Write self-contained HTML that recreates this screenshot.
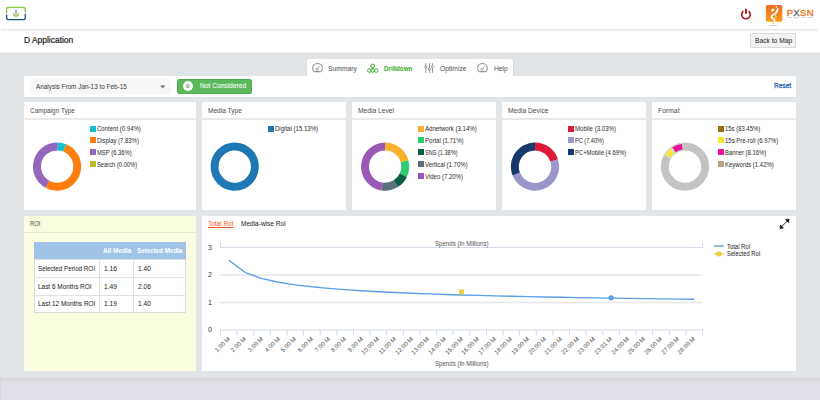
<!DOCTYPE html>
<html><head><meta charset="utf-8"><style>
html,body{margin:0;padding:0;}
body{width:820px;height:400px;position:relative;overflow:hidden;background:#fff;font-family:"Liberation Sans", sans-serif;}
table td{padding:0;vertical-align:middle;white-space:nowrap;}
</style></head><body>
<div style="position:absolute;left:1px;top:29px;width:817px;height:1px;background:#e9e9e9"></div>
<div style="position:absolute;left:1px;top:30px;width:817px;height:1px;background:#f3f3f3"></div>
<svg style="position:absolute;left:5px;top:6px" width="22" height="15" viewBox="0 0 22 15">
<path d="M1.6 6.5 V3.2 Q1.6 1.3 3.5 1.3 H18.4 Q20.3 1.3 20.3 3.2 V6.5" fill="none" stroke="#8dc63f" stroke-width="1.3"/>
<path d="M1.6 8.5 V11.8 Q1.6 13.7 3.5 13.7 H18.4 Q20.3 13.7 20.3 11.8 V8.5" fill="none" stroke="#1f4f63" stroke-width="1.3"/>
<path d="M0.6 6.3 L1.6 7.6 L2.6 6.3 Z" fill="#8dc63f"/><path d="M19.3 8.7 L20.3 7.4 L21.3 8.7 Z" fill="#1f4f63"/>
<path d="M8.6 7.2 Q8.6 10.2 11 10.2 Q13.4 10.2 13.4 7.2" fill="none" stroke="#8dc63f" stroke-width="1.3"/>
<path d="M11 4 V8.2" stroke="#6a7fa8" stroke-width="1.3"/>
</svg>
<svg style="position:absolute;left:740px;top:8px" width="12" height="12" viewBox="0 0 12 12">
<path d="M3.4 3.2 A4.25 4.25 0 1 0 8.6 3.2" fill="none" stroke="#a8141a" stroke-width="1.6"/>
<path d="M6 0.8 V5.7" stroke="#a8141a" stroke-width="1.9"/>
</svg>
<svg style="position:absolute;left:764px;top:3px" width="20" height="24" viewBox="0 0 20 24">
<defs><linearGradient id="og" x1="0" y1="0" x2="0" y2="1"><stop offset="0" stop-color="#f26a22"/><stop offset="1" stop-color="#f7aa1c"/></linearGradient>
<radialGradient id="sh"><stop offset="0" stop-color="#000" stop-opacity=".25"/><stop offset="1" stop-color="#000" stop-opacity="0"/></radialGradient></defs>
<ellipse cx="9.5" cy="22.6" rx="6" ry="1" fill="url(#sh)"/>
<path d="M3.3 2 H16.6 Q18.3 2 18.3 3.7 V17 Q18.3 18.8 16.6 18.8 H11.4 L9 21.8 L8.8 18.8 H3.3 Q1.9 18.8 1.9 17 V3.7 Q1.9 2 3.3 2 Z" fill="url(#og)"/>
<circle cx="8.8" cy="7.0" r="1.6" fill="#fff"/><circle cx="12.5" cy="3.8" r=".9" fill="#fff"/>
<path d="M13.8 5.8 Q13.2 10 8.6 12.3 Q6.2 13.8 8.4 15.2 Q11.8 16.8 10 19.6" fill="none" stroke="#fff" stroke-width="1.7" stroke-linecap="round"/>
<path d="M11.2 12.2 Q13 13.5 11.4 15" fill="none" stroke="#fff" stroke-width="1" opacity=".75"/>
</svg>
<div style="position:absolute;top:7.77px;font-size:9.6px;line-height:9.6px;color:#f26f21;white-space:nowrap;letter-spacing:0.25px;-webkit-text-stroke:0.3px #f26f21;left:786.7px;">P<span style="color:#5f646a;-webkit-text-stroke:0.3px #5f646a">X</span>SN</div>
<div style="position:absolute;left:787px;top:17.4px;width:26px;height:1.0px;background:repeating-linear-gradient(90deg,#aebdd0 0 5px,transparent 5px 7px);opacity:.55"></div>
<div style="position:absolute;top:35.57px;font-size:8.3px;line-height:8.3px;color:#1a1a1a;white-space:nowrap;transform:scaleX(1.0171);transform-origin:0 50%;-webkit-text-stroke:0.2px #1a1a1a;left:24px;">D Application</div>
<div style="position:absolute;left:750px;top:33.3px;width:46px;height:14.700000000000003px;background:#f3f3f3;border:1px solid #d9d9d9;box-sizing:border-box;border-radius:1px"></div>
<div style="position:absolute;top:37.05px;font-size:7.5px;line-height:7.5px;color:#1a1a1a;white-space:nowrap;transform:scaleX(0.8932);transform-origin:0 50%;left:755px;">Back to Map</div>
<div style="position:absolute;left:0px;top:53px;width:820px;height:325px;background:#e1e5e8"></div>
<div style="position:absolute;left:0px;top:52px;width:820px;height:1px;background:#f0f2f3"></div>
<div style="position:absolute;left:0px;top:53px;width:820px;height:1px;background:#dadfe2"></div>
<div style="position:absolute;left:0px;top:377.5px;width:820px;height:2.0px;background:#d8d7db"></div>
<div style="position:absolute;left:0px;top:379.5px;width:820px;height:20.5px;background:#e2dfe8;border-left:1px solid #d9d5dd;border-top:1px solid #dcd9e0;box-sizing:border-box"></div>
<div style="position:absolute;left:306.6px;top:58.7px;width:206.60000000000002px;height:18.299999999999997px;background:#fff;border-radius:2.5px 2.5px 0 0;box-shadow:1px 0 0 #d3d8dc,-1px 0 0 #dadfe2"></div>
<svg style="position:absolute;left:312.1px;top:63.2px" width="12" height="10" viewBox="0 0 12 10">
<path d="M2.2 8.6 Q0.6 7.2 0.6 5.4 A4.8 4.8 0 0 1 10.4 5.4 Q10.4 7.2 8.8 8.6 Z" fill="none" stroke="#9a9a9a" stroke-width="1.1" stroke-linejoin="round"/>
<circle cx="5" cy="6.3" r="1.1" fill="none" stroke="#9a9a9a" stroke-width=".9"/><path d="M5.6 5.6 L7.4 3.4" stroke="#9a9a9a" stroke-width=".9"/>
</svg>
<div style="position:absolute;top:65.05px;font-size:7.5px;line-height:7.5px;color:#505050;white-space:nowrap;transform:scaleX(0.9019);transform-origin:0 50%;left:328px;">Summary</div>
<svg style="position:absolute;left:367px;top:63px" width="12" height="10" viewBox="0 0 12 10">
<g fill="none" stroke="#3aaa35" stroke-width="1"><circle cx="5.7" cy="3" r="1.9"/><circle cx="2.4" cy="7.5" r="1.8"/><circle cx="5.7" cy="7.5" r="1.8"/><circle cx="9.2" cy="7.5" r="1.8"/></g>
<path d="M4.6 4.6 L5.7 6 L6.8 4.6 Z" fill="#3aaa35"/>
</svg>
<div style="position:absolute;top:64.60px;font-size:7.8px;line-height:7.8px;color:#33a82c;white-space:nowrap;transform:scaleX(0.7964);transform-origin:0 50%;font-weight:bold;left:384.2px;">Drilldown</div>
<svg style="position:absolute;left:423px;top:63px" width="12" height="10" viewBox="0 0 12 10">
<g stroke="#8a8a8a" stroke-width="1" fill="#fff"><path d="M2.8 0.2 V9.8 M6.4 0.2 V9.8 M9.4 0.2 V9.8"/>
<path d="M2.8 2.4 L4.1 3.8 L2.8 5.2 L1.5 3.8 Z"/><path d="M6.4 4.6 L7.7 6 L6.4 7.4 L5.1 6 Z"/><path d="M9.4 2.2 L10.6 3.6 L9.4 5 L8.2 3.6 Z"/></g>
</svg>
<div style="position:absolute;top:65.05px;font-size:7.5px;line-height:7.5px;color:#505050;white-space:nowrap;transform:scaleX(0.8969);transform-origin:0 50%;left:440px;">Optimize</div>
<svg style="position:absolute;left:477.2px;top:63.4px" width="12" height="10" viewBox="0 0 12 10">
<path d="M2.2 8.6 Q0.6 7.2 0.6 5.4 A4.8 4.8 0 0 1 10.4 5.4 Q10.4 7.2 8.8 8.6 Z" fill="none" stroke="#9a9a9a" stroke-width="1.1" stroke-linejoin="round"/>
<circle cx="5" cy="6.3" r="1.1" fill="none" stroke="#9a9a9a" stroke-width=".9"/><path d="M5.6 5.6 L7.4 3.4" stroke="#9a9a9a" stroke-width=".9"/>
</svg>
<div style="position:absolute;top:65.05px;font-size:7.5px;line-height:7.5px;color:#505050;white-space:nowrap;transform:scaleX(0.8904);transform-origin:0 50%;left:493.7px;">Help</div>
<div style="position:absolute;left:24px;top:76px;width:772px;height:21px;background:#fff"></div>
<div style="position:absolute;left:30px;top:78.7px;width:140.5px;height:15.099999999999994px;background:#f7f7f7"></div>
<div style="position:absolute;top:82.97px;font-size:7.0px;line-height:7.0px;color:#3a3a3a;white-space:nowrap;transform:scaleX(0.9118);transform-origin:0 50%;left:36px;">Analysis From Jan-13 to Feb-15</div>
<svg style="position:absolute;left:160px;top:84.5px" width="6" height="4"><path d="M0.3 0.5 H5.3 L2.8 3.3 Z" fill="#5b6470"/></svg>
<div style="position:absolute;left:176.6px;top:78.9px;width:75.0px;height:14.899999999999991px;background:#5cb85c;border:1px solid #4cae4c;box-sizing:border-box;border-radius:2px"></div>
<div style="position:absolute;left:182.8px;top:80.8px;width:10px;height:10px;border-radius:50%;background:#fff"></div>
<div style="position:absolute;top:83.05px;font-size:6.2px;line-height:6.2px;color:#5a9a55;white-space:nowrap;font-weight:bold;left:-312.3px;width:1000px;text-align:center;">0</div>
<div style="position:absolute;top:82.91px;font-size:6.6px;line-height:6.6px;color:#fff;white-space:nowrap;transform:scaleX(1.0059);transform-origin:0 50%;-webkit-text-stroke:0.05px #fff;left:199.9px;">Not Considered</div>
<div style="position:absolute;top:83.36px;font-size:6.9px;line-height:6.9px;color:#2f6db5;white-space:nowrap;transform:scaleX(0.9558);transform-origin:0 50%;-webkit-text-stroke:0.3px #2f6db5;left:773.6px;">Reset</div>
<div style="position:absolute;left:24px;top:102px;width:172px;height:108px;background:#fff"></div>
<div style="position:absolute;left:24px;top:118px;width:172px;height:2px;background:#e9e9e9"></div>
<div style="position:absolute;top:107.47px;font-size:7.0px;line-height:7.0px;color:#4a4a4a;white-space:nowrap;transform:scaleX(0.9164);transform-origin:0 50%;left:30px;">Campaign Type</div>
<div style="position:absolute;left:202px;top:102px;width:144px;height:108px;background:#fff"></div>
<div style="position:absolute;left:202px;top:118px;width:144px;height:2px;background:#e9e9e9"></div>
<div style="position:absolute;top:107.47px;font-size:7.0px;line-height:7.0px;color:#4a4a4a;white-space:nowrap;transform:scaleX(0.9380);transform-origin:0 50%;left:208px;">Media Type</div>
<div style="position:absolute;left:352px;top:102px;width:144px;height:108px;background:#fff"></div>
<div style="position:absolute;left:352px;top:118px;width:144px;height:2px;background:#e9e9e9"></div>
<div style="position:absolute;top:107.47px;font-size:7.0px;line-height:7.0px;color:#4a4a4a;white-space:nowrap;transform:scaleX(0.9520);transform-origin:0 50%;left:358px;">Media Level</div>
<div style="position:absolute;left:502px;top:102px;width:144px;height:108px;background:#fff"></div>
<div style="position:absolute;left:502px;top:118px;width:144px;height:2px;background:#e9e9e9"></div>
<div style="position:absolute;top:107.47px;font-size:7.0px;line-height:7.0px;color:#4a4a4a;white-space:nowrap;transform:scaleX(0.9535);transform-origin:0 50%;left:508px;">Media Device</div>
<div style="position:absolute;left:652px;top:102px;width:144px;height:108px;background:#fff"></div>
<div style="position:absolute;left:652px;top:118px;width:144px;height:2px;background:#e9e9e9"></div>
<div style="position:absolute;top:107.47px;font-size:7.0px;line-height:7.0px;color:#4a4a4a;white-space:nowrap;transform:scaleX(0.9718);transform-origin:0 50%;left:658px;">Format</div>
<svg style="position:absolute;left:0;top:0" width="820" height="400"><path d="M57.10 142.50 A24.1 24.1 0 0 1 66.27 144.31 L63.26 151.62 A16.2 16.2 0 0 0 57.10 150.40 Z" fill="#17becf"/><path d="M66.27 144.31 A24.1 24.1 0 1 1 45.54 187.74 L49.33 180.81 A16.2 16.2 0 1 0 63.26 151.62 Z" fill="#ff7f0e"/><path d="M45.54 187.74 A24.1 24.1 0 0 1 57.10 142.50 L57.10 150.40 A16.2 16.2 0 0 0 49.33 180.81 Z" fill="#9467bd"/><circle cx="234.7" cy="166.6" r="20.15" fill="none" stroke="#1f77b4" stroke-width="7.900000000000002"/><path d="M385.10 142.50 A24.1 24.1 0 0 1 408.35 160.25 L400.73 162.33 A16.2 16.2 0 0 0 385.10 150.40 Z" fill="#fbb02d"/><path d="M408.35 160.25 A24.1 24.1 0 0 1 406.87 176.94 L399.73 173.55 A16.2 16.2 0 0 0 400.73 162.33 Z" fill="#2ecc71"/><path d="M406.87 176.94 A24.1 24.1 0 0 1 397.79 187.09 L393.63 180.37 A16.2 16.2 0 0 0 399.73 173.55 Z" fill="#0b5e46"/><path d="M397.79 187.09 A24.1 24.1 0 0 1 381.46 190.42 L382.65 182.61 A16.2 16.2 0 0 0 393.63 180.37 Z" fill="#5d6e7e"/><path d="M381.46 190.42 A24.1 24.1 0 0 1 385.10 142.50 L385.10 150.40 A16.2 16.2 0 0 0 382.65 182.61 Z" fill="#9b59b6"/><path d="M535.00 142.50 A24.1 24.1 0 0 1 557.94 159.21 L550.42 161.63 A16.2 16.2 0 0 0 535.00 150.40 Z" fill="#dc1a3a"/><path d="M557.94 159.21 A24.1 24.1 0 0 1 512.60 175.50 L519.94 172.58 A16.2 16.2 0 0 0 550.42 161.63 Z" fill="#9a96cc"/><path d="M512.60 175.50 A24.1 24.1 0 0 1 535.00 142.50 L535.00 150.40 A16.2 16.2 0 0 0 519.94 172.58 Z" fill="#17396b"/><circle cx="685" cy="166.6" r="20.15" fill="none" stroke="#c3c3c3" stroke-width="7.900000000000002"/><path d="M664.27 155.11 A23.700000000000003 23.700000000000003 0 0 1 670.74 147.67 L675.01 153.34 A16.599999999999998 16.599999999999998 0 0 0 670.48 158.55 Z" fill="#fbe43e" stroke="#d3dcd3" stroke-width="1.2"/><path d="M671.41 147.19 A23.700000000000003 23.700000000000003 0 0 1 682.52 143.03 L683.26 150.09 A16.599999999999998 16.599999999999998 0 0 0 675.48 153.00 Z" fill="#ec139b" stroke="#d3dcd3" stroke-width="1.2"/></svg>
<div style="position:absolute;left:90px;top:125.5px;width:6px;height:6.0px;background:#17becf"></div>
<div style="position:absolute;top:126.37px;font-size:6.3px;line-height:6.3px;color:#2a2a2a;white-space:nowrap;transform:scaleX(0.9565);transform-origin:0 50%;left:97.2px;">Content (0.94%)</div>
<div style="position:absolute;left:90px;top:137.45px;width:6px;height:6.0px;background:#ff7f0e"></div>
<div style="position:absolute;top:138.32px;font-size:6.3px;line-height:6.3px;color:#2a2a2a;white-space:nowrap;transform:scaleX(0.9417);transform-origin:0 50%;left:97.2px;">Display (7.83%)</div>
<div style="position:absolute;left:90px;top:149.4px;width:6px;height:6.0px;background:#9467bd"></div>
<div style="position:absolute;top:150.27px;font-size:6.3px;line-height:6.3px;color:#2a2a2a;white-space:nowrap;transform:scaleX(0.9282);transform-origin:0 50%;left:97.2px;">MSP (6.36%)</div>
<div style="position:absolute;left:90px;top:161.35px;width:6px;height:6.0px;background:#bcbd22"></div>
<div style="position:absolute;top:162.22px;font-size:6.3px;line-height:6.3px;color:#2a2a2a;white-space:nowrap;transform:scaleX(0.9176);transform-origin:0 50%;left:97.2px;">Search (0.00%)</div>
<div style="position:absolute;left:268px;top:125.5px;width:6px;height:6.0px;background:#1f77b4"></div>
<div style="position:absolute;top:126.37px;font-size:6.3px;line-height:6.3px;color:#2a2a2a;white-space:nowrap;transform:scaleX(0.9613);transform-origin:0 50%;left:275.2px;">Digital (15.13%)</div>
<div style="position:absolute;left:418px;top:125.5px;width:6px;height:6.0px;background:#fbb02d"></div>
<div style="position:absolute;top:126.37px;font-size:6.3px;line-height:6.3px;color:#2a2a2a;white-space:nowrap;transform:scaleX(0.9666);transform-origin:0 50%;left:425.2px;">Adnetwork (3.14%)</div>
<div style="position:absolute;left:418px;top:137.45px;width:6px;height:6.0px;background:#2ecc71"></div>
<div style="position:absolute;top:138.32px;font-size:6.3px;line-height:6.3px;color:#2a2a2a;white-space:nowrap;transform:scaleX(0.9582);transform-origin:0 50%;left:425.2px;">Portal (1.71%)</div>
<div style="position:absolute;left:418px;top:149.4px;width:6px;height:6.0px;background:#0b5e46"></div>
<div style="position:absolute;top:150.27px;font-size:6.3px;line-height:6.3px;color:#2a2a2a;white-space:nowrap;transform:scaleX(0.8853);transform-origin:0 50%;left:425.2px;">SNS (1.38%)</div>
<div style="position:absolute;left:418px;top:161.35px;width:6px;height:6.0px;background:#5d6e7e"></div>
<div style="position:absolute;top:162.22px;font-size:6.3px;line-height:6.3px;color:#2a2a2a;white-space:nowrap;transform:scaleX(0.9621);transform-origin:0 50%;left:425.2px;">Vertical (1.70%)</div>
<div style="position:absolute;left:418px;top:173.3px;width:6px;height:6.0px;background:#9b59b6"></div>
<div style="position:absolute;top:174.17px;font-size:6.3px;line-height:6.3px;color:#2a2a2a;white-space:nowrap;transform:scaleX(0.9541);transform-origin:0 50%;left:425.2px;">Video (7.20%)</div>
<div style="position:absolute;left:568px;top:125.5px;width:6px;height:6.0px;background:#dc1a3a"></div>
<div style="position:absolute;top:126.37px;font-size:6.3px;line-height:6.3px;color:#2a2a2a;white-space:nowrap;transform:scaleX(0.9674);transform-origin:0 50%;left:575.2px;">Mobile (3.03%)</div>
<div style="position:absolute;left:568px;top:137.45px;width:6px;height:6.0px;background:#9a96cc"></div>
<div style="position:absolute;top:138.32px;font-size:6.3px;line-height:6.3px;color:#2a2a2a;white-space:nowrap;transform:scaleX(0.8890);transform-origin:0 50%;left:575.2px;">PC (7.40%)</div>
<div style="position:absolute;left:568px;top:149.4px;width:6px;height:6.0px;background:#17396b"></div>
<div style="position:absolute;top:150.27px;font-size:6.3px;line-height:6.3px;color:#2a2a2a;white-space:nowrap;transform:scaleX(0.9338);transform-origin:0 50%;left:575.2px;">PC+Mobile (4.69%)</div>
<div style="position:absolute;left:718px;top:125.5px;width:6px;height:6.0px;background:#9c6b10"></div>
<div style="position:absolute;top:126.37px;font-size:6.3px;line-height:6.3px;color:#2a2a2a;white-space:nowrap;transform:scaleX(0.9387);transform-origin:0 50%;left:725.2px;">15s (83.45%)</div>
<div style="position:absolute;left:718px;top:137.45px;width:6px;height:6.0px;background:#fbe43e"></div>
<div style="position:absolute;top:138.32px;font-size:6.3px;line-height:6.3px;color:#2a2a2a;white-space:nowrap;transform:scaleX(0.9493);transform-origin:0 50%;left:725.2px;">15s Pre-roll (6.97%)</div>
<div style="position:absolute;left:718px;top:149.4px;width:6px;height:6.0px;background:#ec139b"></div>
<div style="position:absolute;top:150.27px;font-size:6.3px;line-height:6.3px;color:#2a2a2a;white-space:nowrap;transform:scaleX(0.9330);transform-origin:0 50%;left:725.2px;">Banner (8.16%)</div>
<div style="position:absolute;left:718px;top:161.35px;width:6px;height:6.0px;background:#b5a282"></div>
<div style="position:absolute;top:162.22px;font-size:6.3px;line-height:6.3px;color:#2a2a2a;white-space:nowrap;transform:scaleX(0.9477);transform-origin:0 50%;left:725.2px;">Keywords (1.42%)</div>
<div style="position:absolute;left:24px;top:215.5px;width:172px;height:155.0px;background:#fafddf"></div>
<div style="position:absolute;left:24px;top:231.5px;width:172px;height:1.5px;background:#e8ead2"></div>
<div style="position:absolute;top:220.64px;font-size:6.8px;line-height:6.8px;color:#4a4a4a;white-space:nowrap;transform:scaleX(0.8488);transform-origin:0 50%;left:30px;">ROI</div>
<div style="position:absolute;left:33.5px;top:242px;width:152.7px;height:17px;background:#9ec3e6"></div>
<div style="position:absolute;left:33.5px;top:259px;width:152.7px;height:54px;background:#fff;border:1px solid #dcdcdc;box-sizing:border-box"></div>
<div style="position:absolute;left:33.5px;top:277.0px;width:152.7px;height:1.0px;background:#e0e0e0"></div>
<div style="position:absolute;left:33.5px;top:295.1px;width:152.7px;height:1.0px;background:#e0e0e0"></div>
<div style="position:absolute;left:98.7px;top:259px;width:1.0px;height:54px;background:#e0e0e0"></div>
<div style="position:absolute;left:133.3px;top:259px;width:1.0px;height:54px;background:#e0e0e0"></div>
<div style="position:absolute;top:246.85px;font-size:7.5px;line-height:7.5px;color:#fff;white-space:nowrap;transform:scaleX(0.8632);transform-origin:0 50%;font-weight:bold;left:103.1px;">All Media</div>
<div style="position:absolute;top:246.85px;font-size:7.5px;line-height:7.5px;color:#fff;white-space:nowrap;transform:scaleX(0.8416);transform-origin:0 50%;font-weight:bold;left:137.3px;">Selected Media</div>
<div style="position:absolute;top:265.76px;font-size:6.9px;line-height:6.9px;color:#1a1a1a;white-space:nowrap;transform:scaleX(0.9062);transform-origin:0 50%;left:38px;">Selected Period ROI</div>
<div style="position:absolute;top:265.76px;font-size:6.9px;line-height:6.9px;color:#1a1a1a;white-space:nowrap;transform:scaleX(0.9706);transform-origin:0 50%;left:104.2px;">1.16</div>
<div style="position:absolute;top:265.76px;font-size:6.9px;line-height:6.9px;color:#1a1a1a;white-space:nowrap;transform:scaleX(0.9551);transform-origin:0 50%;left:138.4px;">1.40</div>
<div style="position:absolute;top:283.66px;font-size:6.9px;line-height:6.9px;color:#1a1a1a;white-space:nowrap;transform:scaleX(0.9320);transform-origin:0 50%;left:38px;">Last 6 Months ROI</div>
<div style="position:absolute;top:283.66px;font-size:6.9px;line-height:6.9px;color:#1a1a1a;white-space:nowrap;transform:scaleX(0.9706);transform-origin:0 50%;left:104.2px;">1.49</div>
<div style="position:absolute;top:283.66px;font-size:6.9px;line-height:6.9px;color:#1a1a1a;white-space:nowrap;transform:scaleX(0.9551);transform-origin:0 50%;left:138.4px;">2.06</div>
<div style="position:absolute;top:301.46px;font-size:6.9px;line-height:6.9px;color:#1a1a1a;white-space:nowrap;transform:scaleX(0.9357);transform-origin:0 50%;left:38px;">Last 12 Months ROI</div>
<div style="position:absolute;top:301.46px;font-size:6.9px;line-height:6.9px;color:#1a1a1a;white-space:nowrap;transform:scaleX(0.9706);transform-origin:0 50%;left:104.2px;">1.19</div>
<div style="position:absolute;top:301.46px;font-size:6.9px;line-height:6.9px;color:#1a1a1a;white-space:nowrap;transform:scaleX(0.9551);transform-origin:0 50%;left:138.4px;">1.40</div>
<div style="position:absolute;left:201.5px;top:215.5px;width:594.5px;height:155.0px;background:#fff"></div>
<div style="position:absolute;top:220.76px;font-size:6.9px;line-height:6.9px;color:#ee5a24;white-space:nowrap;transform:scaleX(0.9371);transform-origin:0 50%;text-decoration:underline;left:207.75px;">Total RoI</div>
<div style="position:absolute;top:220.76px;font-size:6.9px;line-height:6.9px;color:#1a1a1a;white-space:nowrap;transform:scaleX(0.9447);transform-origin:0 50%;left:240.6px;">Media-wise RoI</div>
<svg style="position:absolute;left:0;top:0" width="820" height="400"><line x1="220.5" x2="702.5" y1="275.0" y2="275.0" stroke="#e6e6e6" stroke-width="1.3"/><line x1="220.5" x2="702.5" y1="302.5" y2="302.5" stroke="#e6e6e6" stroke-width="1.3"/><path d="M220.5 242.5 V247.5 H702.5 V242.5" fill="none" stroke="#d0dbe7" stroke-width="1"/><path d="M220.5 335.5 V330 H702.5 V335.5" fill="none" stroke="#d0dbe7" stroke-width="1"/><line x1="237.12" x2="237.12" y1="330" y2="335.5" stroke="#d0dbe7" stroke-width="1"/><line x1="253.74" x2="253.74" y1="330" y2="335.5" stroke="#d0dbe7" stroke-width="1"/><line x1="270.36" x2="270.36" y1="330" y2="335.5" stroke="#d0dbe7" stroke-width="1"/><line x1="286.98" x2="286.98" y1="330" y2="335.5" stroke="#d0dbe7" stroke-width="1"/><line x1="303.60" x2="303.60" y1="330" y2="335.5" stroke="#d0dbe7" stroke-width="1"/><line x1="320.22" x2="320.22" y1="330" y2="335.5" stroke="#d0dbe7" stroke-width="1"/><line x1="336.84" x2="336.84" y1="330" y2="335.5" stroke="#d0dbe7" stroke-width="1"/><line x1="353.47" x2="353.47" y1="330" y2="335.5" stroke="#d0dbe7" stroke-width="1"/><line x1="370.09" x2="370.09" y1="330" y2="335.5" stroke="#d0dbe7" stroke-width="1"/><line x1="386.71" x2="386.71" y1="330" y2="335.5" stroke="#d0dbe7" stroke-width="1"/><line x1="403.33" x2="403.33" y1="330" y2="335.5" stroke="#d0dbe7" stroke-width="1"/><line x1="419.95" x2="419.95" y1="330" y2="335.5" stroke="#d0dbe7" stroke-width="1"/><line x1="436.57" x2="436.57" y1="330" y2="335.5" stroke="#d0dbe7" stroke-width="1"/><line x1="453.19" x2="453.19" y1="330" y2="335.5" stroke="#d0dbe7" stroke-width="1"/><line x1="469.81" x2="469.81" y1="330" y2="335.5" stroke="#d0dbe7" stroke-width="1"/><line x1="486.43" x2="486.43" y1="330" y2="335.5" stroke="#d0dbe7" stroke-width="1"/><line x1="503.05" x2="503.05" y1="330" y2="335.5" stroke="#d0dbe7" stroke-width="1"/><line x1="519.67" x2="519.67" y1="330" y2="335.5" stroke="#d0dbe7" stroke-width="1"/><line x1="536.29" x2="536.29" y1="330" y2="335.5" stroke="#d0dbe7" stroke-width="1"/><line x1="552.91" x2="552.91" y1="330" y2="335.5" stroke="#d0dbe7" stroke-width="1"/><line x1="569.53" x2="569.53" y1="330" y2="335.5" stroke="#d0dbe7" stroke-width="1"/><line x1="586.16" x2="586.16" y1="330" y2="335.5" stroke="#d0dbe7" stroke-width="1"/><line x1="602.78" x2="602.78" y1="330" y2="335.5" stroke="#d0dbe7" stroke-width="1"/><line x1="619.40" x2="619.40" y1="330" y2="335.5" stroke="#d0dbe7" stroke-width="1"/><line x1="636.02" x2="636.02" y1="330" y2="335.5" stroke="#d0dbe7" stroke-width="1"/><line x1="652.64" x2="652.64" y1="330" y2="335.5" stroke="#d0dbe7" stroke-width="1"/><line x1="669.26" x2="669.26" y1="330" y2="335.5" stroke="#d0dbe7" stroke-width="1"/><line x1="685.88" x2="685.88" y1="330" y2="335.5" stroke="#d0dbe7" stroke-width="1"/><polyline points="228.81,260.30 245.43,272.67 262.05,278.57 278.67,282.25 295.29,284.85 311.91,286.82 328.53,288.38 345.16,289.67 361.78,290.75 378.40,291.68 395.02,292.50 411.64,293.21 428.26,293.85 444.88,294.43 461.50,294.95 478.12,295.42 494.74,295.86 511.36,296.26 527.98,296.63 544.60,296.98 561.22,297.31 577.84,297.61 594.47,297.90 611.09,298.17 627.71,298.42 644.33,298.66 660.95,298.89 677.57,299.11 694.19,299.31" fill="none" stroke="#5c9fe4" stroke-width="1.4"/><circle cx="611.09" cy="297.8" r="2.6" fill="#5c9fe4"/><rect x="459.00" y="289.5" width="5" height="5" fill="#e9d043"/><line x1="714" x2="724" y1="246" y2="246" stroke="#5c9fe4" stroke-width="1.4"/><line x1="714" x2="724" y1="254" y2="254" stroke="#e9d043" stroke-width="1.4"/><rect x="716.5" y="251.7" width="5" height="4.6" fill="#e9d043"/><g stroke="#1a1a1a" stroke-width="0.9" fill="#1a1a1a"><line x1="781.2" y1="227.1" x2="787.8" y2="220.5"/><path d="M780 228.4 L780.4 225.1 L783.3 228 Z"/><path d="M789 219.2 L788.6 222.5 L785.7 219.6 Z"/></g></svg>
<div style="position:absolute;top:326.31px;font-size:7.2px;line-height:7.2px;color:#3a3a3a;white-space:nowrap;left:208.0px;">0</div>
<div style="position:absolute;top:298.81px;font-size:7.2px;line-height:7.2px;color:#3a3a3a;white-space:nowrap;left:208.0px;">1</div>
<div style="position:absolute;top:271.31px;font-size:7.2px;line-height:7.2px;color:#3a3a3a;white-space:nowrap;left:208.0px;">2</div>
<div style="position:absolute;top:243.81px;font-size:7.2px;line-height:7.2px;color:#3a3a3a;white-space:nowrap;left:208.0px;">3</div>
<div style="position:absolute;top:240.57px;font-size:6.3px;line-height:6.3px;color:#555;white-space:nowrap;transform:scaleX(0.9687);transform-origin:0 50%;left:435px;">Spends (In Millions)</div>
<div style="position:absolute;top:360.57px;font-size:6.3px;line-height:6.3px;color:#555;white-space:nowrap;transform:scaleX(0.9687);transform-origin:0 50%;left:435px;">Spends (In Millions)</div>
<div style="position:absolute;left:28.81px;top:334.6px;width:200px;height:6px;line-height:6px;font-size:6.1px;color:#4a4a4a;text-align:right;white-space:nowrap;transform-origin:100% 50%;transform:rotate(-45deg)">1.00 M</div>
<div style="position:absolute;left:45.43px;top:334.6px;width:200px;height:6px;line-height:6px;font-size:6.1px;color:#4a4a4a;text-align:right;white-space:nowrap;transform-origin:100% 50%;transform:rotate(-45deg)">2.00 M</div>
<div style="position:absolute;left:62.05px;top:334.6px;width:200px;height:6px;line-height:6px;font-size:6.1px;color:#4a4a4a;text-align:right;white-space:nowrap;transform-origin:100% 50%;transform:rotate(-45deg)">3.00 M</div>
<div style="position:absolute;left:78.67px;top:334.6px;width:200px;height:6px;line-height:6px;font-size:6.1px;color:#4a4a4a;text-align:right;white-space:nowrap;transform-origin:100% 50%;transform:rotate(-45deg)">4.00 M</div>
<div style="position:absolute;left:95.29px;top:334.6px;width:200px;height:6px;line-height:6px;font-size:6.1px;color:#4a4a4a;text-align:right;white-space:nowrap;transform-origin:100% 50%;transform:rotate(-45deg)">5.00 M</div>
<div style="position:absolute;left:111.91px;top:334.6px;width:200px;height:6px;line-height:6px;font-size:6.1px;color:#4a4a4a;text-align:right;white-space:nowrap;transform-origin:100% 50%;transform:rotate(-45deg)">6.00 M</div>
<div style="position:absolute;left:128.53px;top:334.6px;width:200px;height:6px;line-height:6px;font-size:6.1px;color:#4a4a4a;text-align:right;white-space:nowrap;transform-origin:100% 50%;transform:rotate(-45deg)">7.00 M</div>
<div style="position:absolute;left:145.16px;top:334.6px;width:200px;height:6px;line-height:6px;font-size:6.1px;color:#4a4a4a;text-align:right;white-space:nowrap;transform-origin:100% 50%;transform:rotate(-45deg)">8.00 M</div>
<div style="position:absolute;left:161.78px;top:334.6px;width:200px;height:6px;line-height:6px;font-size:6.1px;color:#4a4a4a;text-align:right;white-space:nowrap;transform-origin:100% 50%;transform:rotate(-45deg)">9.00 M</div>
<div style="position:absolute;left:178.40px;top:334.6px;width:200px;height:6px;line-height:6px;font-size:6.1px;color:#4a4a4a;text-align:right;white-space:nowrap;transform-origin:100% 50%;transform:rotate(-45deg)">10.00 M</div>
<div style="position:absolute;left:195.02px;top:334.6px;width:200px;height:6px;line-height:6px;font-size:6.1px;color:#4a4a4a;text-align:right;white-space:nowrap;transform-origin:100% 50%;transform:rotate(-45deg)">11.00 M</div>
<div style="position:absolute;left:211.64px;top:334.6px;width:200px;height:6px;line-height:6px;font-size:6.1px;color:#4a4a4a;text-align:right;white-space:nowrap;transform-origin:100% 50%;transform:rotate(-45deg)">12.00 M</div>
<div style="position:absolute;left:228.26px;top:334.6px;width:200px;height:6px;line-height:6px;font-size:6.1px;color:#4a4a4a;text-align:right;white-space:nowrap;transform-origin:100% 50%;transform:rotate(-45deg)">13.00 M</div>
<div style="position:absolute;left:244.88px;top:334.6px;width:200px;height:6px;line-height:6px;font-size:6.1px;color:#4a4a4a;text-align:right;white-space:nowrap;transform-origin:100% 50%;transform:rotate(-45deg)">14.00 M</div>
<div style="position:absolute;left:261.50px;top:334.6px;width:200px;height:6px;line-height:6px;font-size:6.1px;color:#4a4a4a;text-align:right;white-space:nowrap;transform-origin:100% 50%;transform:rotate(-45deg)">15.00 M</div>
<div style="position:absolute;left:278.12px;top:334.6px;width:200px;height:6px;line-height:6px;font-size:6.1px;color:#4a4a4a;text-align:right;white-space:nowrap;transform-origin:100% 50%;transform:rotate(-45deg)">16.00 M</div>
<div style="position:absolute;left:294.74px;top:334.6px;width:200px;height:6px;line-height:6px;font-size:6.1px;color:#4a4a4a;text-align:right;white-space:nowrap;transform-origin:100% 50%;transform:rotate(-45deg)">17.00 M</div>
<div style="position:absolute;left:311.36px;top:334.6px;width:200px;height:6px;line-height:6px;font-size:6.1px;color:#4a4a4a;text-align:right;white-space:nowrap;transform-origin:100% 50%;transform:rotate(-45deg)">18.00 M</div>
<div style="position:absolute;left:327.98px;top:334.6px;width:200px;height:6px;line-height:6px;font-size:6.1px;color:#4a4a4a;text-align:right;white-space:nowrap;transform-origin:100% 50%;transform:rotate(-45deg)">19.00 M</div>
<div style="position:absolute;left:344.60px;top:334.6px;width:200px;height:6px;line-height:6px;font-size:6.1px;color:#4a4a4a;text-align:right;white-space:nowrap;transform-origin:100% 50%;transform:rotate(-45deg)">20.00 M</div>
<div style="position:absolute;left:361.22px;top:334.6px;width:200px;height:6px;line-height:6px;font-size:6.1px;color:#4a4a4a;text-align:right;white-space:nowrap;transform-origin:100% 50%;transform:rotate(-45deg)">21.00 M</div>
<div style="position:absolute;left:377.84px;top:334.6px;width:200px;height:6px;line-height:6px;font-size:6.1px;color:#4a4a4a;text-align:right;white-space:nowrap;transform-origin:100% 50%;transform:rotate(-45deg)">22.00 M</div>
<div style="position:absolute;left:394.47px;top:334.6px;width:200px;height:6px;line-height:6px;font-size:6.1px;color:#4a4a4a;text-align:right;white-space:nowrap;transform-origin:100% 50%;transform:rotate(-45deg)">23.00 M</div>
<div style="position:absolute;left:411.09px;top:334.6px;width:200px;height:6px;line-height:6px;font-size:6.1px;color:#4a4a4a;text-align:right;white-space:nowrap;transform-origin:100% 50%;transform:rotate(-45deg)">23.01 M</div>
<div style="position:absolute;left:427.71px;top:334.6px;width:200px;height:6px;line-height:6px;font-size:6.1px;color:#4a4a4a;text-align:right;white-space:nowrap;transform-origin:100% 50%;transform:rotate(-45deg)">24.00 M</div>
<div style="position:absolute;left:444.33px;top:334.6px;width:200px;height:6px;line-height:6px;font-size:6.1px;color:#4a4a4a;text-align:right;white-space:nowrap;transform-origin:100% 50%;transform:rotate(-45deg)">25.00 M</div>
<div style="position:absolute;left:460.95px;top:334.6px;width:200px;height:6px;line-height:6px;font-size:6.1px;color:#4a4a4a;text-align:right;white-space:nowrap;transform-origin:100% 50%;transform:rotate(-45deg)">26.00 M</div>
<div style="position:absolute;left:477.57px;top:334.6px;width:200px;height:6px;line-height:6px;font-size:6.1px;color:#4a4a4a;text-align:right;white-space:nowrap;transform-origin:100% 50%;transform:rotate(-45deg)">27.00 M</div>
<div style="position:absolute;left:494.19px;top:334.6px;width:200px;height:6px;line-height:6px;font-size:6.1px;color:#4a4a4a;text-align:right;white-space:nowrap;transform-origin:100% 50%;transform:rotate(-45deg)">28.00 M</div>
<div style="position:absolute;top:243.78px;font-size:6.4px;line-height:6.4px;color:#1a1a1a;white-space:nowrap;transform:scaleX(0.9234);transform-origin:0 50%;left:726.9px;">Total RoI</div>
<div style="position:absolute;top:251.48px;font-size:6.4px;line-height:6.4px;color:#1a1a1a;white-space:nowrap;transform:scaleX(0.9092);transform-origin:0 50%;left:726.9px;">Selected RoI</div>
</body></html>
